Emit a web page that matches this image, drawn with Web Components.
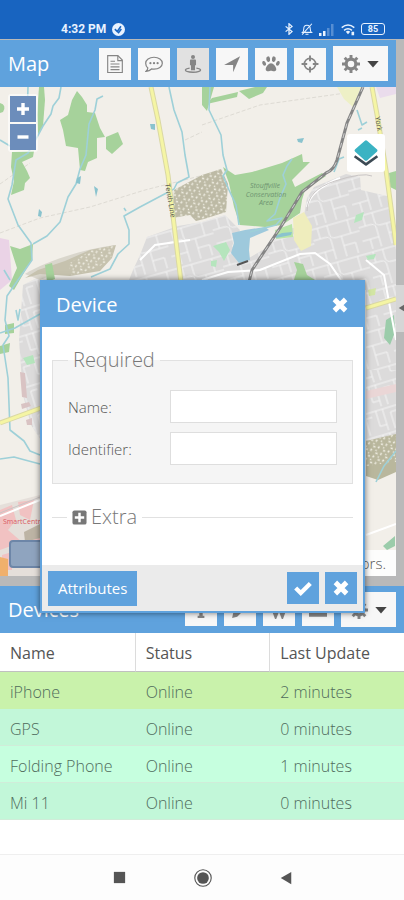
<!DOCTYPE html>
<html lang="en">
<head>
<meta charset="utf-8">
<meta name="viewport" content="width=device-width, initial-scale=1">
<title>Map</title>
<style>
    body {
        margin: 0;
        background: #fff;
        font-family: "Open Sans", "Noto Sans", sans-serif;
    }
</style>
</head>
<body>
<tracker-app></tracker-app>

<script>
const ICONS = {
    report: '<g fill="none" stroke="currentColor" stroke-width="1"><path d="M1.5.5h9l4 4v11h-13z"/><path d="M10.5.5v4.500h4M4 5.500h4M4 8h8M4 10.500h8M4 13h8"/></g>',
    comment: '<path d="M8 2c4.200 0 7.400 2.300 7.400 5.300S12.200 12.600 8 12.600c-.8 0-1.500-.1-2.200-.2C4.600 13.600 3 14.300 1 14.500c.8-.8 1.400-1.700 1.500-3C1.300 10.400.6 9 .6 7.300.6 4.300 3.800 2 8 2z" fill="none" stroke="currentColor" stroke-width="1.100"/><g fill="currentColor"><circle cx="4.800" cy="7.300" r="1"/><circle cx="8" cy="7.300" r="1"/><circle cx="11.200" cy="7.300" r="1"/></g>',
    person: '<g fill="currentColor"><circle cx="8" cy="1.800" r="1.800"/><path d="M6.300 4h3.400c.6 0 1 .4 1 1v4H9.800v4.500H6.200V9h-.9V5c0-.6.4-1 1-1z"/></g><path d="M5 11.700c-2 .3-3.700.8-3.700 1.700 0 1.200 3.200 1.900 6.700 1.900s6.700-.7 6.700-1.900c0-.9-1.700-1.400-3.700-1.700" fill="none" stroke="currentColor" stroke-width="1.200"/>',
    arrow: '<path d="M15.200 1L9 15.300V8.800H1z" fill="currentColor"/>',
    paw: '<g fill="currentColor"><ellipse cx="5.500" cy="3.700" rx="1.700" ry="2.500" transform="rotate(-10 5.500 3.700)"/><ellipse cx="10.500" cy="3.700" rx="1.700" ry="2.500" transform="rotate(10 10.500 3.700)"/><ellipse cx="1.900" cy="7.400" rx="1.500" ry="2.200" transform="rotate(-22 1.900 7.400)"/><ellipse cx="14.100" cy="7.400" rx="1.500" ry="2.200" transform="rotate(22 14.100 7.400)"/><path d="M8 7.300c2 0 4.700 3.200 4.700 5.300 0 1.300-1 1.900-2.200 1.900-1 0-1.600-.6-2.500-.6s-1.500.6-2.500.6c-1.200 0-2.200-.6-2.200-1.900 0-2.100 2.700-5.300 4.700-5.300z"/></g>',
    target: '<circle cx="8" cy="8" r="5" fill="none" stroke="currentColor" stroke-width="1.500"/><path d="M8 .5v5M8 10.500v5M.5 8h5M10.500 8h5" stroke="currentColor" stroke-width="1.700"/>',
    gear: '<circle cx="8" cy="8" r="4.300" fill="none" stroke="currentColor" stroke-width="2.800"/><path d="M8 0v3M8 13v3M0 8h3M13 8h3M2.400 2.400l2 2M11.600 11.600l2 2M2.400 13.600l2-2M11.600 4.400l2-2" stroke="currentColor" stroke-width="2.600"/>',
    caret: '<path d="M1.500 4.500h13L8 12z" fill="currentColor"/>',
    close: '<path d="M3 3l10 10M13 3L3 13" stroke="currentColor" stroke-width="4.400"/>',
    check: '<path d="M1.500 8l4.500 4.500L14.500 4" fill="none" stroke="currentColor" stroke-width="3.800"/>',
    plus: '<path d="M6.300 2h3.400v4.300H14v3.400H9.700V14H6.300V9.700H2V6.300h4.300z" fill="currentColor"/>',
    minus: '<path d="M2.500 6.300h11v3.400h-11z" fill="currentColor"/>',
    expand: '<rect x=".5" y=".5" width="15" height="15" rx="2" fill="currentColor"/><path d="M8 3v10M3 8h10" stroke="#fff" stroke-width="2.600"/>',
    info: '<path d="M6.500 1h3v3h-3zM5 6h4.500v7H11v2H5v-2h1.500V8H5z" fill="currentColor"/>',
    pencil: '<path d="M11.500 1l3.500 3.500L5.500 14 1 15l1-4.500z" fill="currentColor"/>',
    remove: '<path d="M1 3l4 11 3-8 3 8 4-11" fill="none" stroke="currentColor" stroke-width="2.400"/>',
    keyboard: '<path d="M0 3h16v11H0z" fill="currentColor"/><path d="M2 6h12M2 8.500h12" stroke="#fff" stroke-dasharray="1.500 1"/>',
    layers: '<path d="M1 10l7 5 7-5" fill="none" stroke="#3c4a54" stroke-width="1.600" stroke-linejoin="round"/><path d="M8 1.200l6 5.300L8 11.800 2 6.500z" fill="#3bb3c3" stroke="#3bb3c3" stroke-width="2" stroke-linejoin="round"/>',
    synced: '<circle cx="8" cy="8" r="8" fill="currentColor"/><path d="M3.500 7.500l3 3L11 4M7.500 12.500l4-5" fill="none" stroke="#1864c0" stroke-width="1.900"/>',
    bluetooth: '<path d="M3.500 4.500l8.500 7-4 3.500V1l4 3.500-8.500 7" fill="none" stroke="currentColor" stroke-width="1.700"/>',
    mute: '<path d="M2 12.500h12c-1.500-1.200-1.700-3-1.700-5C12.300 4.500 10.500 3 8 3S3.700 4.500 3.700 7.500c0 2-.2 3.800-1.700 5zM6 15h4M14.500 1L1.500 15.500" fill="none" stroke="currentColor" stroke-width="1.400"/>',
    signal: '<g fill="currentColor"><path d="M0 12h2.500v3H0zM4 10h2.500v5H4z"/><path d="M8 7h2.500v8H8zM12 3h2.500v12H12z" opacity=".3"/></g>',
    wifi: '<g fill="none" stroke="currentColor" stroke-width="1.700"><path d="M.8 6.500q7.200-6 14.400 0M3.500 9.500q4.500-3.800 9 0"/></g><path d="M5.500 11q2.500-2 5 0L8 14zM12 11h3v4h-3z" fill="currentColor"/>',
    square: '<path d="M2 2h12v12H2z" fill="currentColor"/>',
    home: '<circle cx="8" cy="8" r="7.300" fill="none" stroke="currentColor" stroke-width="1"/><circle cx="8" cy="8" r="5.200" fill="currentColor"/>',
    back: '<path d="M14 1v14L2 8z" fill="currentColor"/>',
    left: '<path d="M14 0v16L1 8z" fill="currentColor"/>'
};

class UiIcon extends HTMLElement {
    constructor() {
        super();
        this.attachShadow({ mode: "open" });
    }

    connectedCallback() {
        const size = this.getAttribute("size") || 18;
        this.shadowRoot.innerHTML = `
            <style>
                :host { display: inline-flex; flex: none; }
            </style>
            <svg width="${size}" height="${size}" viewBox="0 0 16 16" aria-hidden="true">${ICONS[this.getAttribute("name")]}</svg>
        `;
    }
}

class StatusBar extends HTMLElement {
    constructor() {
        super();
        this.attachShadow({ mode: "open" }).innerHTML = `
            <style>
                :host {
                    display: flex;
                    align-items: flex-end;
                    justify-content: space-between;
                    box-sizing: border-box;
                    height: 39px;
                    padding: 0 19px 2px 61px;
                    background: #1864c0;
                    color: #e8f2ff;
                }
                div { display: flex; align-items: center; gap: 6px; }
                time { font: bold 12px/16px Roboto, sans-serif; }
                .battery {
                    box-sizing: border-box;
                    width: 24px;
                    height: 12px;
                    border: 1px solid currentColor;
                    border-radius: 3px;
                    font: bold 9px/10px Roboto, sans-serif;
                    text-align: center;
                }
            </style>
            <div><time>4:32 PM</time><ui-icon name="synced" size="13"></ui-icon></div>
            <div>
                <ui-icon name="bluetooth" size="12"></ui-icon>
                <ui-icon name="mute" size="12"></ui-icon>
                <ui-icon name="signal" size="16"></ui-icon>
                <ui-icon name="wifi" size="14"></ui-icon>
                <span class="battery">85</span>
            </div>
        `;
    }
}

class ToolButton extends HTMLElement {
    constructor() {
        super();
        this.attachShadow({ mode: "open" });
    }

    connectedCallback() {
        const icon = this.getAttribute("icon");
        const menu = this.hasAttribute("menu");
        this.shadowRoot.innerHTML = `
            <style>
                :host { display: block; }
                button {
                    display: flex;
                    align-items: center;
                    justify-content: center;
                    gap: 6px;
                    width: 32px;
                    height: 32px;
                    padding: 0;
                    border: 0;
                    background: #f7f7f7;
                    color: #858585;
                }
                :host([pressed]) button { background: #e1e1e1; }
                :host([menu]) button { width: 55px; height: 35px; }
                :host([primary]) button { background: #5fa2dd; color: #fff; }
                .caret { color: #444; }
            </style>
            <button type="button" aria-label="${this.getAttribute("label")}">
                <ui-icon name="${icon}" size="18"></ui-icon>
                ${menu ? '<ui-icon class="caret" name="caret" size="14"></ui-icon>' : ""}
            </button>
        `;
    }
}

class PanelHeader extends HTMLElement {
    constructor() {
        super();
        this.attachShadow({ mode: "open" }).innerHTML = `
            <style>
                :host {
                    display: flex;
                    align-items: center;
                    justify-content: space-between;
                    box-sizing: border-box;
                    height: 47px;
                    padding: 0 8px;
                    background: #5fa2dd;
                    color: #fff;
                }
                h2 { margin: 0; font-size: 20px; line-height: 28px; font-weight: 400; }
                div { display: flex; align-items: center; gap: 7px; }
            </style>
            <h2><slot></slot></h2>
            <div><slot name="tools"></slot></div>
        `;
    }
}

class StreetMap extends HTMLElement {
    constructor() {
        super();
        this.attachShadow({ mode: "open" }).innerHTML = `
            <style>
                :host { display: block; position: relative; overflow: hidden; height: 489px; background: #f2efe9; }
                svg.map { display: block; width: 100%; height: 100%; }
                .zoom { position: absolute; left: 8px; top: 7px; display: grid; gap: 2px; padding: 2px; border-radius: 3px; background: rgba(255, 255, 255, .6); }
                .zoom button { display: flex; align-items: center; justify-content: center; width: 26px; height: 26px; padding: 0; border: 0; background: #6c8dbb; color: #fff; }
                .layers { position: absolute; right: 11px; top: 47px; width: 38px; height: 38px; padding: 0; border: 0; border-radius: 3px; background: #fff; display: flex; align-items: center; justify-content: center; }
                .scale { position: absolute; left: 9px; bottom: 8px; width: 90px; height: 28px; box-sizing: border-box; border: 2px solid #6d86a8; border-radius: 4px; background: #8fa4bf; }
                .credit { position: absolute; right: 0; bottom: 0; padding: 2px 10px 2px 4px; background: rgba(255, 255, 255, .85); font-size: 15px; line-height: 22px; font-weight: 300; color: #555; white-space: nowrap; }
            </style>
            <svg class="map" viewBox="0 87 396 489" preserveAspectRatio="xMinYMin slice" role="img" aria-label="Street map">
                <defs>
                    <pattern id="streets" width="47" height="38" patternUnits="userSpaceOnUse" patternTransform="rotate(-16)">
                        <path d="M0 3h47M0 14h12q5 0 5 5v19M7 3v11M17 3v9q0 5 6 5h24M28 17v21M28 27h12v11M38 3v14M0 28h17M8 28v10" fill="none" stroke="#f4f4f4" stroke-width="1"/>
                    </pattern>
                    <pattern id="blocks" width="26" height="25" patternUnits="userSpaceOnUse" patternTransform="rotate(-17)">
                        <path d="M0 3h26M5 3v16M12 3v22M5 19h7M19 8v17M19 8h7" fill="none" stroke="#f4f4f4" stroke-width="1"/>
                    </pattern>
                    <pattern id="dots" width="8" height="7" patternUnits="userSpaceOnUse" patternTransform="rotate(-18)">
                        <path d="M1 1l2 1M5 4l2-1M2 6l1 -1" stroke="#eeece1" stroke-width="1.400"/>
                    </pattern>
                </defs>

                <!-- farmland boundaries -->
                <g fill="none" stroke="#dedbd4" stroke-width="1" stroke-dasharray="4 2">
                    <path d="M0 233L40 218 90 207 145 190 200 176M202 125L260 105 360 91M0 184L30 163M185 140L202 132"/>
                </g>

                <!-- built-up areas -->
                <g fill="#dcdbdb">
                    <path d="M147 237L178 226 202 222 225 215 240 230 232 246 242 262 268 247 285 229 302 227 307 198 314 187 346 174 360 177 361 190 387 196 396 250V450H366V290H125L133 270 140 255z"/>
                    <path d="M23 285L41 276V440L31 425 23 395 19 340z"/>
                </g>
                <path d="M147 237L178 226 202 222 225 215 240 230 232 246 242 262 268 247 285 229 302 227 307 198 314 187 346 174 360 177 361 190 387 196 396 250V370H366V290H125L133 270 140 255z" fill="url(#streets)"/>
                <path d="M366 370H396V440H366zM23 285L41 276V440L31 425 23 395 19 340z" fill="url(#blocks)"/>
                <path d="M366 391L396 384V392L366 399z" fill="#ead6d6"/>
                <path d="M20 372L25 373 27 398 22 397zM21 404L29 402 31 406 22 409zM26 420L32 418 32 425 27 425z" fill="#d9c3c3"/>
                <path d="M25 274C44 262 80 250 115 245L90 260 40 280z" fill="#d9d6cc"/>
                <path d="M0 238L9 240 12 280 0 290z" fill="#ead3e6"/>
                <path d="M376 87H396V94L380 98z" fill="#eadcec"/>
                <path d="M337 87H361L353 107 344 99z" fill="#eef0c6"/>
                <path d="M0 505L40 495V576H0z" fill="#e5dfda"/>
                <path d="M0 510L12 505 16 520 8 530 22 542 0 550zM18 502L34 500 30 520 20 515zM30 530L42 526V542H31zM2 555L12 552V570H2z" fill="#f1c2c2"/>
                <path d="M0 557L8 559V576H0z" fill="#f0b06c"/>
                <path d="M24 532L40 524V538L25 542z" fill="#bdb4a5"/>

                <!-- aggregate sites -->
                <g>
                    <path d="M174 190L202 175 221 169 228 184 226 212 204 219 196 221 190 215 172 218z" fill="#bdbaa5"/>
                    <path d="M174 190L202 175 221 169 228 184 226 212 204 219 172 218z" fill="url(#dots)"/>
                    <path d="M25 278L38 270 65 261 90 250 116 245 112 258 100 271 70 276 40 274z" fill="#c6c2ae"/>
                    <path d="M68 264L92 250 116 245 110 260 96 268 72 276z" fill="url(#dots)"/>
                    <path d="M366 441L396 434V472L378 480 366 476z" fill="#b9b79d"/>
                    <path d="M366 441L396 434V462L366 466z" fill="url(#dots)"/>
                </g>

                <!-- woods and parks -->
                <g fill="#a6d29b">
                    <path d="M60 120L68 115 72 100 77 91 82 97 87 105 87 112 95 113 100 128 105 137 97 138 97 158 88 162 85 171 80 170 78 148 66 146 63 130z"/>
                    <path d="M106 137L118 132 123 144 112 154 106 149z"/>
                    <path d="M39 87H44L45 100 43 126 38 135 37 115z"/>
                    <path d="M0 103Q7 105 3 112L0 113z"/>
                    <path d="M12 152L34 151 33 157 22 162 27 171 30 178 25 183 24 190 11 195 14 181 11 167z"/>
                    <path d="M10 246L20 249 33 244 32 259 25 271 14 290 9 286 17 268z"/>
                    <path d="M45 265L52 263 55 279 47 282z"/>
                    <path d="M202 87H214L207 111 202 105zM212 98L238 92 237 97 207 104zM239 91L255 87H267L263 93 249 99z"/>
                    <path d="M223 167L235 175 252 172 282 163 302 154 303 162 310 162 292 180 295 187 322 173 326 176 305 190 302 200 300 213 282 225 265 227 240 225 234 207 229 183z"/>
                    <path d="M389 173L396 171V190L390 187z"/>
                    <path d="M294 262L303 264 307 275 315 280H294L297 270z"/>
                    <path d="M5 325L14 323 14 333 5 334zM0 346L10 343 9 352 0 354z"/>
                </g>
                <path d="M275 230L292 224 293 237 276 239z" fill="#b7e5a7"/>
                <path d="M293 218L304 212 312 226 311 246 301 251 294 240z" fill="#efedbd"/>
                <g fill="#b5e5bd">
                    <path d="M213 246L226 242 230 250 224 261 219 252zM211 261L217 260 216 267 211 266zM356 215L364 212 362 220 354 223zM368 256L376 254 374 259 367 260zM23 358L33 355 35 363 27 365zM366 256L375 254 373 258 367 258z"/>
                </g>
                <path d="M386 320L394 315 395 332 390 345 384 338zM383 546L395 536V546L387 550z" fill="#9bccaa"/>
                <path d="M368 290L376 288 375 295 369 296z" fill="#d3e6a4"/>

                <!-- water -->
                <path d="M232 233L245 230 265 227 269 230 250 238 249 250 250 260 239 263 231 253 234 243z" fill="#9ec9dc"/>
                <g fill="none" stroke="#9ed0d8" stroke-width="1.600" stroke-linejoin="round">
                    <path d="M61 87L59 98 53 106 51 114 43 126 36 139 28 153 16 160 12 185 8 199 18 225 31 243 32 260 18 280 7 296 5 320 9 336 3 345 8 378 10 430 24 441 30 451 40 455"/>
                    <path d="M103 96L97 99 95 110 89 124 86 155 80 169 76 184 68 197 60 222 47 236 33 244"/>
                    <path d="M169 87L174 110 182 132 185 155 189 177 177 183 174 189 140 207 124 216 129 230 129 244 118 254 110 269 91 277"/>
                    <path d="M210 87L209 110 221 135 223 155 227 170 223 176 229 190 236 205 239 225"/>
                    <path d="M292 159L287 166 283 175 286 184 280 198 275 214 267 221 282 218 276 225 250 232"/>
                    <path d="M357 110L362 125 367 122M362 128L358 130M344 157L339 159 334 172"/>
                    <path d="M0 459L14 457 25 460 40 464M0 333L15 328 40 314M16 310L18 320 20 309M396 451L384 466 376 482"/>
                    <path d="M28 87L27 120M0 140L10 146M4 270L10 280M126 211L124 208"/>
                </g>
                <path d="M77 178L81 176 80 184 76 183zM94 186L98 189 96 197zM39 209L42 212 41 217 38 216zM150 124L155 124 155 130 151 129zM297 139L304 138 302 143 298 142zM275 236L282 233 292 232 291 235 276 238z" fill="#8ac3ce"/>

                <!-- roads -->
                <g fill="none" stroke="#fff" stroke-width="2">
                    <path d="M202 280L228 272 260 270 300 254 315 253 330 264 341 280M140 260L155 245 190 240M307 207Q310 190 340 178M366 260L384 275 396 340M0 516L40 500M366 535L396 524"/>
                </g>
                <path d="M307 211Q307 190 335 181T372 176M0 513L40 497" fill="none" stroke="#c9c5c5"/>
                <path d="M151 87L158 120 168 175 181 282M372 87L378 120 386 170 396 245M0 423L41 408M366 308L396 299" fill="none" stroke="#dad8a4" stroke-width="5"/>
                <path d="M151 87L158 120 168 175 181 282M372 87L378 120 386 170 396 245M0 423L41 408M366 308L396 299" fill="none" stroke="#f5f5a4" stroke-width="3"/>

                <!-- railway -->
                <g fill="none">
                    <path d="M363 87L347 123 337 160 Q334 170 326 173L302 192 282 225 252 270 249 282" stroke="#858585" stroke-width="3"/>
                    <path d="M363 87L347 123 337 160 Q334 170 326 173L302 192 282 225 252 270 249 282" stroke="#d0d0d0" stroke-width="1" stroke-dasharray="5 5"/>
                    <path d="M237 265L248 261" stroke="#555" stroke-width="2"/>
                </g>

                <g font-family="Open Sans, sans-serif">
                    <g font-size="7" font-style="italic" fill="#6f9472" text-anchor="middle">
                        <text x="265" y="188">Stouffville</text>
                        <text x="266" y="197">Conservation</text>
                        <text x="266" y="205">Area</text>
                    </g>
                    <text font-size="7" fill="#555" transform="translate(165 184) rotate(80)">Tenth Line</text>
                    <text font-size="7" fill="#555" transform="translate(375 117) rotate(80)">York</text>
                    <text x="3" y="524" font-size="7" fill="#d85a62">SmartCentres</text>
                </g>
            </svg>
            <div class="zoom">
                <button type="button" aria-label="Zoom in"><ui-icon name="plus" size="16"></ui-icon></button>
                <button type="button" aria-label="Zoom out"><ui-icon name="minus" size="16"></ui-icon></button>
            </div>
            <button class="layers" type="button" aria-label="Layers"><ui-icon name="layers" size="26"></ui-icon></button>
            <div class="scale"></div>
            <div class="credit">contributors.</div>
        `;
    }
}

class FormField extends HTMLElement {
    constructor() {
        super();
        this.attachShadow({ mode: "open" });
    }

    connectedCallback() {
        this.shadowRoot.innerHTML = `
            <style>
                :host { display: flex; align-items: center; }
                label { flex: none; width: 102px; font-size: 15px; line-height: 22px; font-weight: 300; color: #555; }
                input {
                    flex: 1;
                    min-width: 0;
                    box-sizing: border-box;
                    height: 33px;
                    padding: 4px 8px;
                    border: 1px solid #dedede;
                    background: #fff;
                    font: inherit;
                }
            </style>
            <label for="field">${this.getAttribute("label")}:</label>
            <input id="field" type="text">
        `;
    }
}

class DeviceDialog extends HTMLElement {
    constructor() {
        super();
        this.attachShadow({ mode: "open" }).innerHTML = `
            <style>
                :host {
                    display: block;
                    border: 2px solid #5fa2dd;
                    box-shadow: 0 0 6px rgba(0, 0, 0, .55);
                    background: #fff;
                }
                header {
                    display: flex;
                    align-items: center;
                    justify-content: space-between;
                    height: 45px;
                    padding: 0 14px;
                    background: #5fa2dd;
                    color: #fff;
                }
                h2 { margin: 0; font-size: 20px; line-height: 28px; font-weight: 400; }
                header button { display: flex; padding: 0; border: 0; background: none; color: #fff; }
                form { display: block; padding: 19px 10px 34px; }
                fieldset { min-width: 0; margin: 0; padding: 16px 15px 18px; border: 1px solid #e1e1e1; background: #f5f5f5; }
                legend { padding: 0 5px; font-size: 20px; line-height: 28px; font-weight: 300; color: #777; }
                .fields { display: grid; grid-template-columns: minmax(0, 1fr); gap: 9px; }
                .extra { margin-top: 19px; padding: 0 15px; border-width: 1px 0 0; background: none; }
                .extra button { display: flex; align-items: center; gap: 4px; padding: 0; border: 0; background: none; font: inherit; color: inherit; }
                footer {
                    display: flex;
                    align-items: center;
                    gap: 6px;
                    height: 46px;
                    padding: 0 6px;
                    background: #ebebeb;
                }
                .attributes { height: 35px; margin-right: auto; padding: 0 10px; border: 0; background: #5fa2dd; color: #fff; font: 400 15px/20px "Open Sans", sans-serif; }
            </style>
            <header>
                <h2>Device</h2>
                <button type="button" aria-label="Close"><ui-icon name="close" size="18"></ui-icon></button>
            </header>
            <form>
                <fieldset>
                    <legend>Required</legend>
                    <div class="fields">
                        <form-field label="Name"></form-field>
                        <form-field label="Identifier"></form-field>
                    </div>
                </fieldset>
                <fieldset class="extra">
                    <legend><button type="button"><ui-icon name="expand" size="15"></ui-icon>Extra</button></legend>
                </fieldset>
            </form>
            <footer>
                <button class="attributes" type="button">Attributes</button>
                <tool-button primary icon="check" label="Save"></tool-button>
                <tool-button primary icon="close" label="Cancel"></tool-button>
            </footer>
        `;
    }
}

class DeviceTable extends HTMLElement {
    constructor() {
        super();
        this.attachShadow({ mode: "open" });
        this._devices = [];
    }

    set devices(list) {
        this._devices = list;
        this.render();
    }

    render() {
        const rows = this._devices.map(d => `
            <tr${d.selected ? ' class="selected"' : ""}><td>${d.name}</td><td>${d.status}</td><td>${d.updated}</td></tr>`).join("");

        this.shadowRoot.innerHTML = `
            <style>
                :host { display: block; }
                table { width: 100%; border-collapse: separate; border-spacing: 0; table-layout: fixed; font-size: 16px; line-height: 22px; }
                th, td { box-sizing: border-box; padding: 1px 10px 0; text-align: left; white-space: nowrap; }
                th { height: 39px; border-bottom: 1px solid #c0c0c0; font-weight: 400; color: #555; }
                th + th { border-left: 1px solid #dcdcdc; }
                td { height: 37px; padding-top: 3px; border-bottom: 1px solid #d0ecd9; background: #c6ffdf; font-weight: 300; color: #4f6b5c; }
                td + td { padding-left: 11px; }
                tr:nth-child(even) td { background: #c2f7d9; }
                tr:last-child td { background: #c2f7d9; }
                tr.selected td { background: #c9f2ab; border-color: #c9f2ab; }
            </style>
            <table>
                <thead><tr><th>Name</th><th>Status</th><th>Last Update</th></tr></thead>
                <tbody>${rows}</tbody>
            </table>
        `;
    }
}

class NavBar extends HTMLElement {
    constructor() {
        super();
        this.attachShadow({ mode: "open" }).innerHTML = `
            <style>
                :host {
                    display: flex;
                    align-items: center;
                    justify-content: center;
                    gap: 67px;
                    height: 45px;
                    border-top: 1px solid #efefef;
                    background: #fdfdfd;
                }
                button { display: flex; padding: 0; border: 0; background: none; color: #555; }
            </style>
            <button type="button" aria-label="Recent apps"><ui-icon name="square" size="15"></ui-icon></button>
            <button type="button" aria-label="Home"><ui-icon name="home" size="18"></ui-icon></button>
            <button type="button" aria-label="Back"><ui-icon name="back" size="14"></ui-icon></button>
        `;
    }
}

class TrackerApp extends HTMLElement {
    constructor() {
        super();
        this.attachShadow({ mode: "open" }).innerHTML = `
            <style>
                :host { display: flex; flex-direction: column; position: relative; min-height: 100vh; }
                .top { display: flex; background: #b9b9b9; padding: 1px 0 10px; }
                .map { flex: 1; min-width: 0; }
                .rail { display: flex; flex-direction: column; justify-content: center; width: 8px; }
                .rail button {
                    display: flex;
                    align-items: center;
                    height: 47px;
                    padding: 0 0 0 2px;
                    border: 0;
                    background: #d6d6d6;
                    color: #666;
                    overflow: hidden;
                }
                device-dialog { position: absolute; top: 280px; left: 40px; right: 39px; }
                nav-bar { margin-top: auto; }
            </style>
            <status-bar></status-bar>
            <div class="top">
                <div class="map">
                    <panel-header>
                        Map
                        <tool-button slot="tools" icon="report" label="Reports"></tool-button>
                        <tool-button slot="tools" icon="comment" label="Events"></tool-button>
                        <tool-button slot="tools" icon="person" label="Street view" pressed></tool-button>
                        <tool-button slot="tools" icon="arrow" label="Live routes"></tool-button>
                        <tool-button slot="tools" icon="paw" label="Follow"></tool-button>
                        <tool-button slot="tools" icon="target" label="Locate"></tool-button>
                        <tool-button slot="tools" icon="gear" label="Settings" menu></tool-button>
                    </panel-header>
                    <street-map></street-map>
                </div>
                <div class="rail"><button type="button" aria-label="Show panel"><ui-icon name="left" size="12"></ui-icon></button></div>
            </div>
            <panel-header>
                Devices
                <tool-button slot="tools" icon="info" label="Add"></tool-button>
                <tool-button slot="tools" icon="pencil" label="Edit"></tool-button>
                <tool-button slot="tools" icon="remove" label="Remove"></tool-button>
                <tool-button slot="tools" icon="keyboard" label="Command"></tool-button>
                <tool-button slot="tools" icon="gear" label="Device settings" menu></tool-button>
            </panel-header>
            <device-table></device-table>
            <device-dialog role="dialog" aria-label="Device"></device-dialog>
            <nav-bar></nav-bar>
        `;
    }

    connectedCallback() {
        this.shadowRoot.querySelector("device-table").devices = [
            { name: "iPhone", status: "Online", updated: "2 minutes", selected: true },
            { name: "GPS", status: "Online", updated: "0 minutes" },
            { name: "Folding Phone", status: "Online", updated: "1 minutes" },
            { name: "Mi 11", status: "Online", updated: "0 minutes" }
        ];
    }
}

customElements.define("ui-icon", UiIcon);
customElements.define("status-bar", StatusBar);
customElements.define("tool-button", ToolButton);
customElements.define("panel-header", PanelHeader);
customElements.define("street-map", StreetMap);
customElements.define("form-field", FormField);
customElements.define("device-dialog", DeviceDialog);
customElements.define("device-table", DeviceTable);
customElements.define("nav-bar", NavBar);
customElements.define("tracker-app", TrackerApp);
</script>
</body>
</html>
